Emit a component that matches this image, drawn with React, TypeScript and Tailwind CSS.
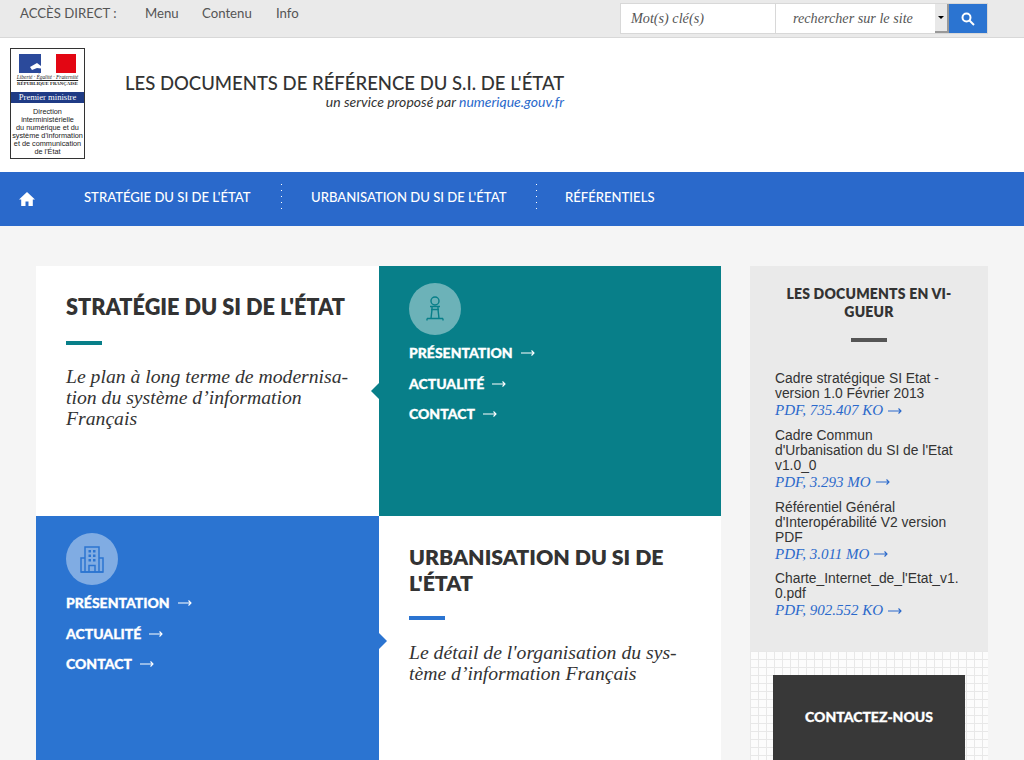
import React from "react";

const sans = "font-['Lato','Liberation_Sans',sans-serif]";
const serif = "font-['Liberation_Serif','DejaVu_Serif',serif]";

function Arrow({ className = "" }: { className?: string }) {
  return (
    <svg width="14" height="8" viewBox="0 0 14 8" fill="none" stroke="currentColor" strokeWidth="1.1" className={className}>
      <path d="M0 4H13M10.5 1.5L13 4L10.5 6.5" />
    </svg>
  );
}

function Logo() {
  return (
    <div className="w-[75px] h-[111px] border border-[#333] bg-white flex flex-col items-stretch overflow-hidden">
      <svg width="57" height="19" viewBox="0 0 57 19" className="mt-[5px] ml-[8px] shrink-0">
        <rect width="57" height="19" fill="#fff" />
        <rect width="22" height="19" fill="#2b4a9b" />
        <rect x="37" width="20" height="19" fill="#e30613" />
        <path d="M24 19C25 14 21 11 23 6C24 2 28 0 31 0C35 1 36 4 35 7L37 11L35 13C35 16 33 17 31 19Z" fill="#fff" />
        <path d="M11 13L18 9L26 15L18 14L13 16Z" fill="#fff" />
      </svg>
      <div className={`${serif} text-[5.4px] leading-[7px] h-[7px] italic text-center text-[#222] mt-[1px] underline whitespace-nowrap`}>Liberté · Égalité · Fraternité</div>
      <div className={`${serif} text-[4.8px] leading-[6px] h-[6px] text-center text-[#222] font-bold whitespace-nowrap`}>RÉPUBLIQUE FRANÇAISE</div>
      <div className={`${serif} bg-[#1f3b85] text-white text-[8.6px] leading-[11px] h-[11px] text-center mt-[5px] shrink-0`}>Premier ministre</div>
      <div className="font-['Liberation_Sans',sans-serif] text-[7.3px] leading-[7.9px] text-[#222] text-center mt-[5px] whitespace-nowrap">
        <div>Direction</div>
        <div>interministérielle</div>
        <div>du numérique et du</div>
        <div>système d'information</div>
        <div>et de communication</div>
        <div>de l'État</div>
      </div>
    </div>
  );
}

function Pawn() {
  return (
    <svg width="18" height="26" viewBox="0 0 18 26" fill="none" stroke="#087f89" strokeWidth="1.4">
      <circle cx="9" cy="5" r="4" />
      <path d="M4 10.5H14M5 13.5H13M6 10.5V13.5M12 10.5V13.5M6 13.5L5 22.5M12 13.5L13 22.5M1 22.5H17M1 22.5V24.5M17 22.5V24.5" />
    </svg>
  );
}

function Building() {
  return (
    <svg width="24" height="27" viewBox="0 0 24 27" fill="none" stroke="#2b74d1" strokeWidth="1.5">
      <path d="M5 26V1H19V26" />
      <path d="M5 12H1V26H23V12H19" />
      <path d="M9 26V19.5H15V26" />
      <path d="M1 26H23" />
      <g fill="#2b74d1" stroke="none">
        <rect x="8.5" y="4" width="2.5" height="2.5" />
        <rect x="13" y="4" width="2.5" height="2.5" />
        <rect x="8.5" y="8.5" width="2.5" height="2.5" />
        <rect x="13" y="8.5" width="2.5" height="2.5" />
        <rect x="8.5" y="13" width="2.5" height="2.5" />
        <rect x="13" y="13" width="2.5" height="2.5" />
      </g>
    </svg>
  );
}

function LinkList() {
  return (
    <ul className={`${sans} text-white font-black text-[14px] leading-[20px] mt-[8px] flex flex-col gap-[10.5px] [-webkit-text-stroke:0.3px_#ffffff]`}>
      {["PRÉSENTATION", "ACTUALITÉ", "CONTACT"].map((t) => (
        <li key={t} className="flex items-center gap-[8px]">
          {t}
          <Arrow />
        </li>
      ))}
    </ul>
  );
}

function Doc({ title, meta }: { title: React.ReactNode; meta: string }) {
  return (
    <div>
      <div className="font-['Liberation_Sans',sans-serif] text-[13.85px] leading-[15px] text-[#333]">{title}</div>
      <div className={`${serif} italic text-[15px] leading-[19px] text-[#2a69cb] flex items-center gap-[5px]`}>
        {meta}
        <Arrow className="text-[#2a69cb]" />
      </div>
    </div>
  );
}

const dots = "h-[26px] w-px bg-[repeating-linear-gradient(to_bottom,#ffffff_0,#ffffff_1px,transparent_1px,transparent_6px)]";

export default function App() {
  return (
    <div className={`${sans} h-[760px] w-[1024px] overflow-hidden bg-[#f5f5f5] text-[#333]`}>
      <div className="h-[38px] bg-[#eaeaea] border-b border-[#d8d8d8] flex items-start pl-[20px] pr-[36px]">
        <div className="flex text-[13.2px] leading-[16px] text-[#555] pt-[5px]">
          <span className="w-[125px]">ACCÈS DIRECT :</span>
          <span className="w-[57px]">Menu</span>
          <span className="w-[74px]">Contenu</span>
          <span>Info</span>
        </div>
        <div className={`${serif} ml-auto mt-[3px] h-[31px] w-[368px] flex border border-[#d8d8d8] bg-white italic text-[14.2px] text-[#555]`}>
          <div className="w-[155px] border-r border-[#d8d8d8] pl-[10px] leading-[29px]">Mot(s) clé(s)</div>
          <div className="w-[159px] pl-[17px] leading-[29px] whitespace-nowrap">rechercher sur le site</div>
          <div className="w-[14px] h-[29px] bg-[#e8e8e8] border-r-2 border-b-2 border-[#999] flex items-center justify-center">
            <div className="w-0 h-0 border-l-[3px] border-r-[3px] border-t-[3px] border-l-transparent border-r-transparent border-t-black" />
          </div>
          <div className="w-[38px] h-[29px] bg-[#2b74d1] flex items-center justify-center">
            <svg width="14" height="14" viewBox="0 0 14 14" fill="none" stroke="#fff" strokeWidth="2">
              <circle cx="5.5" cy="5.5" r="4" />
              <path d="M8.5 8.5L13 13" />
            </svg>
          </div>
        </div>
      </div>

      <header className="h-[134px] bg-white flex items-start pl-[10px]">
        <div className="mt-[10px]">
          <Logo />
        </div>
        <div className="ml-[40px] mt-[33px] w-[439px]">
          <div className="text-[18.5px] leading-[24px] font-medium text-[#333] whitespace-nowrap">LES DOCUMENTS DE RÉFÉRENCE DU S.I. DE L'ÉTAT</div>
          <div className="text-[14px] leading-[16px] italic text-right mt-[-1px] text-[#333] whitespace-nowrap">
            un service proposé par <span className="text-[#2a69cb]">numerique.gouv.fr</span>
          </div>
        </div>
      </header>

      <nav className="h-[54px] bg-[#2a69cb] flex items-center text-white text-[13.1px] font-medium">
        <svg width="16" height="14" viewBox="0 0 16 14" fill="#fff" className="ml-[19px]">
          <path d="M8 0L0 7.5H2.2V14H6.5V9.5H9.5V14H13.8V7.5H16Z" />
        </svg>
        <span className="ml-[49px] w-[197px] whitespace-nowrap mb-[2px]">STRATÉGIE DU SI DE L'ÉTAT</span>
        <span className={`${dots} mb-[4px]`} />
        <span className="ml-[29px] w-[225px] whitespace-nowrap mb-[2px]">URBANISATION DU SI DE L'ÉTAT</span>
        <span className={`${dots} mb-[4px]`} />
        <span className="ml-[28px] whitespace-nowrap mb-[2px]">RÉFÉRENTIELS</span>
      </nav>

      <main className="flex items-start pl-[36px] pt-[40px] gap-[29px]">
        <div className="w-[685px] grid grid-cols-[343px_342px] grid-rows-[250px_250px]">
          <section className="bg-white pl-[30px] pr-[20px] pt-[28px]">
            <h2 className="text-[21.7px] leading-[26px] font-extrabold text-[#333] whitespace-nowrap">STRATÉGIE DU SI DE L'ÉTAT</h2>
            <div className="w-[36px] h-[4px] bg-[#087f89] mt-[21px]" />
            <p className={`${serif} italic text-[19.7px] leading-[21px] text-[#333] mt-[21px] whitespace-nowrap`}>
              Le plan à long terme de modernisa-
              <br />
              tion du système d’information
              <br />
              Français
            </p>
          </section>
          <section className="relative bg-[#087f89] pl-[30px] pt-[17px]">
            <div className="absolute left-[-8px] top-[117px] w-0 h-0 border-y-[8px] border-r-[8px] border-y-transparent border-r-[#087f89]" />
            <div className="w-[52px] h-[52px] rounded-full bg-[#6cb2b8] flex items-center justify-center">
              <Pawn />
            </div>
            <LinkList />
          </section>
          <section className="relative z-10 bg-[#2b74d1] pl-[30px] pt-[17px]">
            <div className="absolute right-[-8px] top-[117px] w-0 h-0 border-y-[8px] border-l-[8px] border-y-transparent border-l-[#2b74d1]" />
            <div className="w-[52px] h-[52px] rounded-full bg-[#80ace3] flex items-center justify-center">
              <Building />
            </div>
            <LinkList />
          </section>
          <section className="bg-white pl-[30px] pr-[20px] pt-[28px]">
            <h2 className="text-[21.3px] leading-[26px] font-extrabold text-[#333] whitespace-nowrap">
              URBANISATION DU SI DE
              <br />
              L'ÉTAT
            </h2>
            <div className="w-[36px] h-[4px] bg-[#2b74d1] mt-[20px]" />
            <p className={`${serif} italic text-[19.7px] leading-[21px] text-[#333] mt-[22px] whitespace-nowrap`}>
              Le détail de l'organisation du sys-
              <br />
              tème d’information Français
            </p>
          </section>
        </div>

        <aside className="w-[238px]">
          <div className="h-[385px] bg-[#eaeaea] pt-[19px] px-[25px]">
            <h3 className="text-[14px] leading-[18px] font-extrabold text-[#333] text-center tracking-[0.2px]">
              LES DOCUMENTS EN VI-
              <br />
              GUEUR
            </h3>
            <div className="w-[36px] h-[4px] bg-[#555] mx-auto mt-[17px]" />
            <div className="mt-[29px] flex flex-col gap-[7.8px]">
              <Doc title={<>Cadre stratégique SI Etat -<br />version 1.0 Février 2013</>} meta="PDF, 735.407 KO" />
              <Doc title={<>Cadre Commun<br />d'Urbanisation du SI de l'Etat<br />v1.0_0</>} meta="PDF, 3.293 MO" />
              <Doc title={<>Référentiel Général<br />d'Interopérabilité V2 version<br />PDF</>} meta="PDF, 3.011 MO" />
              <Doc title={<>Charte_Internet_de_l'Etat_v1.<br />0.pdf</>} meta="PDF, 902.552 KO" />
            </div>
          </div>
          <div className="h-[110px] bg-[#fcfcfc] bg-[linear-gradient(#e8e8e8_1px,transparent_1px),linear-gradient(90deg,#e8e8e8_1px,transparent_1px)] bg-[size:8px_8px] pt-[24px] px-[23px]">
            <div className="h-[120px] bg-[#383838] text-white text-center font-black text-[14px] leading-[20px] pt-[32px] [-webkit-text-stroke:0.3px_#ffffff]">CONTACTEZ-NOUS</div>
          </div>
        </aside>
      </main>
    </div>
  );
}
